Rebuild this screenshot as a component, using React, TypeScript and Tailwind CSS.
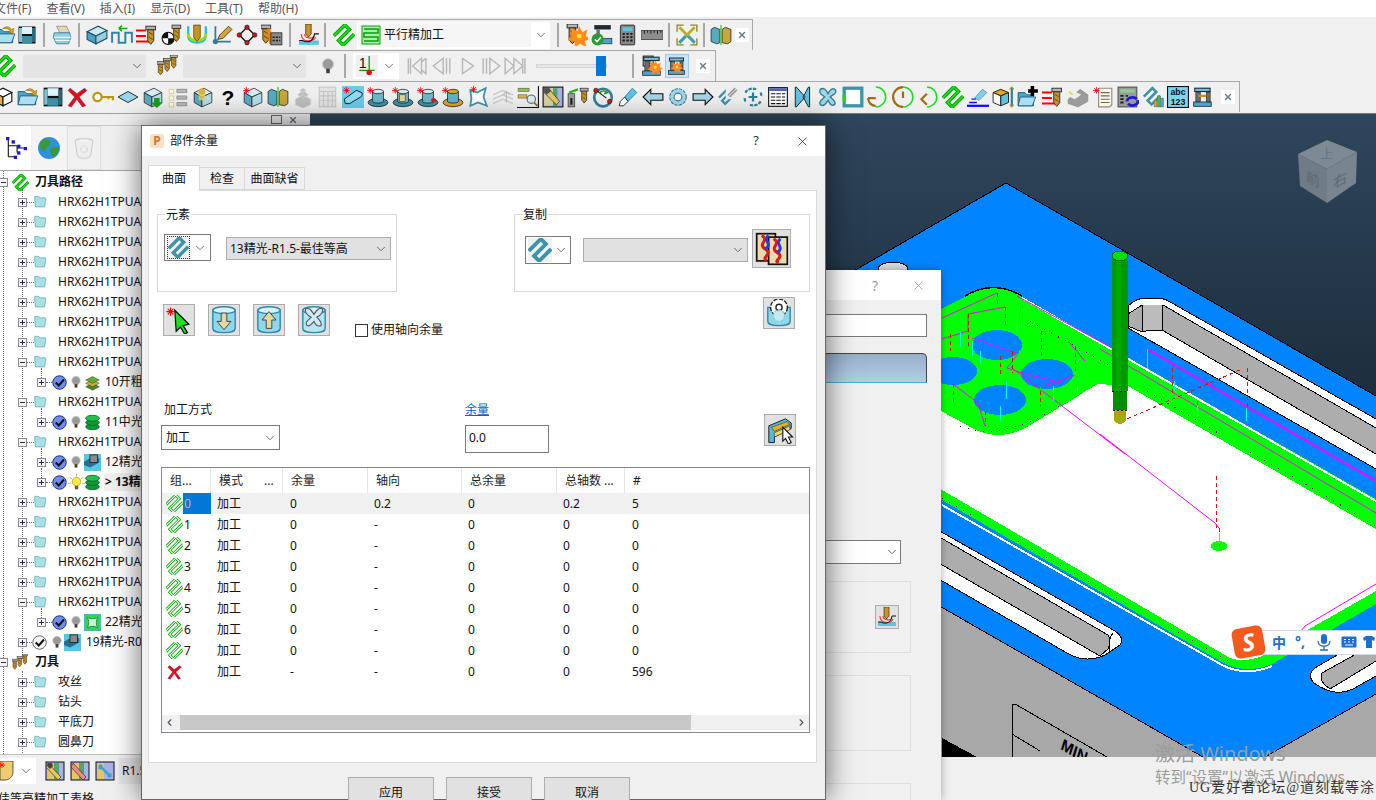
import type { ReactNode } from 'react'
import { ChevronDown, ChevronLeft, ChevronRight, X } from 'lucide-react'

const Svg = ({ size = 20, children }: { size?: number; children: ReactNode }) => (
  <svg width={size} height={size} viewBox="0 0 20 20" className="block shrink-0">
    {children}
  </svg>
)

const Zig = ({ dark = '#009a00', light = '#19e019', size = 22 }: { dark?: string; light?: string; size?: number }) => (
  <Svg size={size}>
    <g transform="rotate(-45 10 10)" fill="none" strokeLinejoin="miter">
      <path d="M3 4H17V10H3V16H17" stroke={dark} strokeWidth="3.2" />
      <path d="M3 4H17V10H3V16H17" stroke={light} strokeWidth="1.600" />
    </g>
  </Svg>
)

const Tool = ({ x = 0, y = 0, s = 1 }: { x?: number; y?: number; s?: number }) => (
  <g transform={`translate(${x} ${y}) scale(${s})`}>
    <rect width="8" height="3" fill="#b5b5b5" stroke="#222" strokeWidth=".7" />
    <path d="M1.5 3h5v9L4 15l-2.500-3z" fill="#c8931e" stroke="#222" strokeWidth=".7" />
    <path d="M2.500 5l3 2M2.500 9l3 2" stroke="#5f4208" strokeWidth=".8" />
  </g>
)

const Star = ({ x = 4, y = 4 }: { x?: number; y?: number }) => (
  <path d={`M${x - 3} ${y}h6M${x} ${y - 3}v6M${x - 2} ${y - 2}l4 4M${x + 2} ${y - 2}l-4 4`} stroke="#f00" strokeWidth=".8" />
)

const Cyl = ({ top = '#cfe9f1', dot }: { top?: string; dot?: string }) => (
  <>
    <ellipse cx="10" cy="15" rx="9" ry="3.800" fill="#3d8fa6" stroke="#222" strokeWidth=".7" />
    <path d="M5 5v9c0 2 10 2 10 0V5z" fill="#6cb8cc" stroke="#222" strokeWidth=".7" />
    <ellipse cx="10" cy="5" rx="5" ry="2" fill={top} stroke="#222" strokeWidth=".7" />
    {dot && <circle cx="15" cy="13" r="2.200" fill={dot} />}
  </>
)

const Open = (
  <>
    <path d="M1 5h6l2 2h8v10H1z" fill="#4ba3c7" stroke="#1d5d78" strokeWidth=".8" />
    <path d="M3 9h16l-3 8H1z" fill="#a9dff0" stroke="#1d5d78" strokeWidth=".8" />
    <path d="M8 4c3-2 6-2 8 1l2-1-1 5-4-2 2-1c-2-2-4-2-7-2z" fill="#e9a11b" stroke="#8a5a08" strokeWidth=".5" />
  </>
)

const Save = (
  <>
    <rect x="1.500" y="1.500" width="17" height="17" fill="#111" />
    <rect x="5" y="2" width="10" height="7" fill="#dff2f7" />
    <rect x="5" y="11" width="10" height="7" fill="#3d8fa6" />
    <rect x="2" y="3" width="3" height="14" fill="#7cc4d8" />
    <rect x="15" y="3" width="3" height="14" fill="#2a6b80" />
  </>
)

const BoxT = (
  <>
    <path d="M2 6l9-4 7 4-9 4z" fill="#d6eef5" stroke="#222" strokeWidth=".7" />
    <path d="M2 6v9l7 4v-9z" fill="#5ba9c0" stroke="#222" strokeWidth=".7" />
    <path d="M9 10v9l9-4V6z" fill="#b4dde9" stroke="#222" strokeWidth=".7" />
  </>
)

const Calc = (
  <>
    <rect x="4" y="1" width="13" height="18" rx="1" fill="#8a8a8a" stroke="#222" strokeWidth=".8" />
    <rect x="6" y="3" width="9" height="3.500" fill="#58c6e6" />
    <path d="M6 9h2M9.500 9h2M13 9h2M6 12h2M9.500 12h2M13 12h2M6 15h2M9.500 15h2M13 15h2" stroke="#111" strokeWidth="1.600" />
  </>
)

const Burst = ({ x = 13, y = 11, r = 7 }: { x?: number; y?: number; r?: number }) => (
  <>
    <path
      d={`M${x - r} ${y - r}l${r * 0.8} ${r * 0.4}l${r * 0.2} ${-r * 0.6}l${r * 0.4} ${r * 0.7}l${r * 0.6} ${-r * 0.3}l${-r * 0.2} ${r * 0.8}l${r * 0.6} ${r * 0.3}l${-r * 0.7} ${r * 0.3}l${r * 0.2} ${r * 0.8}l${-r * 0.8} ${-r * 0.5}l${-r * 0.6} ${r * 0.5}l${-r * 0.1} ${-r * 0.8}l${-r * 0.8} ${-r * 0.1}l${r * 0.5} ${-r * 0.6}z`}
      fill="#ff8a1f"
    />
    <circle cx={x} cy={y} r={r * 0.3} fill="#ffe03a" />
  </>
)

const Machine = (
  <>
    <rect x="2" y="1.500" width="15" height="4" fill="#1e2a30" />
    <rect x="3" y="2.500" width="13" height="2" fill="#72c4dd" />
    <rect x="3.500" y="5.500" width="4" height="9" fill="#6d6d6d" stroke="#222" strokeWidth=".6" />
    <rect x="1.500" y="14.500" width="16" height="4" fill="#4ba3c7" stroke="#222" strokeWidth=".7" />
  </>
)

const Ico: Record<string, ReactNode> = {
  open: Open,
  save: Save,
  print: (
    <>
      <path d="M5 2h9l3 6H8z" fill="#e3d9b0" stroke="#777" strokeWidth=".6" />
      <path d="M3 8h14l1 4-2 6H5l-3-6z" fill="#8fd0e6" stroke="#3b7f98" strokeWidth=".8" />
      <path d="M3 12h15M4 15h13" stroke="#fff" />
    </>
  ),
  box: (
    <>
      <path d="M1 7l10-5 8 4-10 5z" fill="#cfe9f1" stroke="#1d4e60" strokeWidth="1" />
      <path d="M1 7v7l8 4v-7z" fill="#4ba3c7" stroke="#1d4e60" strokeWidth="1" />
      <path d="M9 11v7l10-5V6z" fill="#97cfe0" stroke="#1d4e60" strokeWidth="1" />
    </>
  ),
  path: (
    <>
      <path d="M1 17V8h6v9h6V8h6v9" fill="none" stroke="#2d88a8" strokeWidth="1.800" />
      <path d="M15 4H7M7 4l3-2.500M7 4l3 2.500" fill="none" stroke="#17a317" strokeWidth="1.400" />
    </>
  ),
  linesTool: (
    <>
      <path d="M0 6h9M0 11h9M0 16h12" stroke="#f00" strokeWidth="1.800" />
      <Tool x={9} y={2} s={1.100} />
    </>
  ),
  ballTool: (
    <>
      <circle cx="6.500" cy="13" r="5.500" fill="#fff" stroke="#111" />
      <path d="M6.500 13V7.500a5.500 5.500 0 0 0-5.500 5.500zM6.500 13v5.500a5.500 5.500 0 0 0 5.500-5.500z" fill="#111" />
      <Tool x={10} y={1} s={1} />
    </>
  ),
  uTool: (
    <>
      <path d="M2 2v9c0 8 16 8 16 0V2" fill="none" stroke="#18c0e8" strokeWidth="2" />
      <path d="M2 9c0 8 16 8 16 0" fill="none" stroke="#a8d800" strokeWidth="2.400" />
      <path d="M7 1h6v11l-3 4-3-4z" fill="#c8931e" stroke="#4a3205" strokeWidth=".6" />
    </>
  ),
  arrowPen: (
    <>
      <path d="M4 2v14h14" fill="none" stroke="#2d7f9a" strokeWidth="1.600" />
      <circle cx="4" cy="16" r="2.400" fill="#2d7f9a" />
      <path d="M6 14l2-4 8-8 3 3-8 8z" fill="#d8a537" stroke="#222" strokeWidth=".7" />
    </>
  ),
  dots: (
    <>
      <path d="M10 3l7 7-7 7-7-7z" fill="none" stroke="#111" strokeWidth="1.200" />
      <g fill="#e01010" stroke="#111" strokeWidth=".6">
        <circle cx="10" cy="3" r="2" />
        <circle cx="17" cy="10" r="2" />
        <circle cx="10" cy="17" r="2" />
        <circle cx="3" cy="10" r="2" />
      </g>
    </>
  ),
  toolCalc: (
    <>
      <Tool x={0} y={1} s={1.100} />
      <path d="M7 4l2 14" stroke="#ff7a18" strokeWidth="3" />
      <rect x="9" y="8" width="10" height="11" fill="#8a8a8a" stroke="#222" strokeWidth=".7" />
      <path d="M10.500 12h7M10.500 15h7" stroke="#222" strokeDasharray="2 1" strokeWidth="1.400" />
    </>
  ),
  toolArc: (
    <>
      <rect x="1" y="15" width="18" height="4" fill="#58c6e6" />
      <path d="M3 9c0 8 11 8 13 3" fill="none" stroke="#e44" strokeWidth="1.200" />
      <path d="M6 9c0 4 7 5 9 2" fill="none" stroke="#e44" strokeWidth="1.200" />
      <path d="M1 15h3c6 3 10 0 11-6h4" fill="none" stroke="#111" strokeWidth="1" />
      <path d="M7 0h5v9l-2.500 3L7 9z" fill="#c8931e" stroke="#222" strokeWidth=".6" />
    </>
  ),
  green: (
    <>
      <rect x="1" y="1" width="18" height="18" fill="#a8f0a8" stroke="#109a10" />
      <path d="M3 4h14v4H3v4h14v4H3" fill="none" stroke="#0a9a0a" strokeWidth="1.500" />
    </>
  ),
  burst: (
    <>
      <Tool x={1} y={0} s={1.200} />
      <Burst x={12} y={11} r={7.500} />
    </>
  ),
  machCheck: (
    <>
      <rect x="3" y="1" width="15" height="4" fill="#1e2a30" />
      <rect x="5" y="5" width="3" height="7" fill="#6d6d6d" />
      <rect x="6" y="13" width="13" height="5" fill="#4ba3c7" stroke="#222" strokeWidth=".6" />
      <circle cx="6" cy="14" r="5.500" fill="#2b9a37" />
      <path d="M3.500 14l2 2 3.500-4" fill="none" stroke="#fff" strokeWidth="1.300" />
    </>
  ),
  calc: Calc,
  ruler: (
    <>
      <rect x="0" y="6" width="20" height="8" fill="#8d8d8d" stroke="#333" strokeWidth=".7" />
      <path d="M3 6v3M6 6v2M9 6v3M12 6v2M15 6v3M18 6v2" stroke="#111" strokeWidth=".8" />
    </>
  ),
  xArrows: (
    <>
      <path d="M3 3l14 14M17 3L3 17" stroke="#b7ad35" strokeWidth="2.600" />
      <path d="M11 11l6 6M9 11l-6 6" stroke="#3b9fb8" strokeWidth="2.600" />
      <path d="M1 7V1h6M13 1h6v6M19 13v6h-6M7 19H1v-6" fill="none" stroke="#8c8520" strokeWidth="1.200" />
    </>
  ),
  books: (
    <>
      <path d="M1 5l3-2 5 2v12l-3 1-5-2z" fill="#57aac4" stroke="#222" strokeWidth=".7" />
      <path d="M11 5l3-2 5 2v11l-3 2-5-1z" fill="#c9a53b" stroke="#222" strokeWidth=".7" />
      <path d="M10 1v18" stroke="#3cc63c" strokeWidth="1.200" />
    </>
  ),
  tools: (
    <>
      <Tool x={0} y={6} s={.8} />
      <Tool x={6} y={3} s={.8} />
      <Tool x={12} y={0} s={.8} />
    </>
  ),
  bulb: (
    <>
      <circle cx="10" cy="8" r="6" fill="#9a9a9a" stroke="#bbb" />
      <rect x="8" y="13" width="4" height="5" fill="#4d3a2a" />
    </>
  ),
  one: (
    <>
      <rect x="0" y="0" width="20" height="20" fill="#f0f0f0" />
      <path d="M12 1v16M3 14h14" stroke="#0aa00a" strokeWidth="1.200" />
      <circle cx="12" cy="16" r="2.500" fill="#e01010" />
      <text x="2.500" y="12" fontSize="13" fill="#111" fontFamily="Liberation Sans, sans-serif">1</text>
    </>
  ),
  first: <path d="M3 3v14M5 3v14M15 3l-8 7 8 7zM19 3l-4 3.500M19 3v14l-4-3.500" fill="none" stroke="#b8b8b8" strokeWidth="1.300" />,
  prev: <path d="M15 3v14M18 3v14M12 3l-9 7 9 7z" fill="none" stroke="#b8b8b8" strokeWidth="1.300" />,
  play: <path d="M5 3l10 7-10 7z" fill="none" stroke="#b8b8b8" strokeWidth="1.300" />,
  next: <path d="M2 3v14M5 3v14M8 3l9 7-9 7z" fill="none" stroke="#b8b8b8" strokeWidth="1.300" />,
  last: <path d="M1 3l8 7-8 7zM9 3l8 7-8 7zM17 3v14M19 3v14" fill="none" stroke="#b8b8b8" strokeWidth="1.300" />,
  machFire: (
    <>
      <rect x="2" y="1" width="9" height="9" fill="#fff" stroke="#222" />
      <path d="M3.500 3.500h6M3.500 5.500h6M3.500 7.500h6" stroke="#222" />
      {Machine}
      <Burst x={13} y={11} r={5} />
    </>
  ),
  machFire2: (
    <>
      {Machine}
      <rect x="13" y="5" width="3" height="9" fill="#6d6d6d" stroke="#222" strokeWidth=".6" />
      <Burst x={10} y={11} r={4.500} />
    </>
  ),
  box3d: (
    <>
      <path d="M2 6l8-4 8 4-8 4z" fill="#fff" stroke="#111" />
      <path d="M2 6v8l8 4v-8z" fill="#e4b53a" stroke="#111" />
      <path d="M10 10v8l8-4V6z" fill="#fff" stroke="#111" />
    </>
  ),
  redX: <path d="M3 2l6 5 7-5 2 2-7 6 6 8-3 1-5-7-5 7-3-1 6-8-6-6z" fill="#e20d0d" stroke="#7a1880" strokeWidth=".5" />,
  key: (
    <>
      <circle cx="5" cy="10" r="3.800" fill="#fff" stroke="#b99a08" strokeWidth="2" />
      <path d="M9 10h10v3M15 10v2" fill="none" stroke="#b99a08" strokeWidth="2" />
    </>
  ),
  plane: <path d="M1 10l9-5 9 5-9 5z" fill="#9bd7ea" stroke="#111" strokeWidth=".8" />,
  boxDown: (
    <>
      {BoxT}
      <path d="M11 11h5v4h3l-5.500 5L8 15h3z" fill="#14a014" />
    </>
  ),
  list: (
    <>
      <path d="M2 3h4v4H2zM2 9h4v4H2zM2 15h4v4H2z" fill="#fdf7dc" stroke="#c6bd84" strokeWidth=".6" />
      <path d="M9 3h9v3H9zM9 9h9v3H9zM9 15h9v3H9z" fill="#b8b8b8" stroke="#666" strokeWidth=".5" />
    </>
  ),
  boxCyan: (
    <>
      {BoxT}
      <rect x="6" y="4" width="6" height="9" fill="#e4cf6a" fillOpacity=".8" />
      <circle cx="9" cy="5" r="3" fill="#d8b53a" />
    </>
  ),
  help: <text x="10" y="17" textAnchor="middle" fontSize="19" fontWeight="700" fill="#000" fontFamily="Liberation Sans, sans-serif">?</text>,
  burstBox: (
    <>
      {BoxT}
      <Star x={4} y={4} />
    </>
  ),
  grayStack: <path d="M3 12l7-4 7 4v5l-7 3-7-3zM5 8l5-4 5 4-5 3zM7 4l3-2 3 2-3 2z" fill="#bdbdbd" stroke="#d5d5d5" strokeWidth=".6" />,
  grayCalc: (
    <>
      <rect x="2" y="1" width="15" height="18" fill="#e3e3e3" stroke="#c6c6c6" />
      <path d="M2 5h15M2 9h15M2 13h15M6 5v14M10 5v14M14 5v14" stroke="#c6c6c6" />
    </>
  ),
  pad: (
    <>
      <rect x="0" y="0" width="20" height="20" fill="#69cdea" />
      <path d="M2 12L13 4l5 2c1 2 0 3-1 4L7 16H3z" fill="#8fdcf2" stroke="#123" strokeWidth=".9" />
      <Star x={4} y={4} />
    </>
  ),
  cylA: (
    <>
      <Cyl />
      <Star x={3} y={4} />
    </>
  ),
  cylB: (
    <>
      <Cyl />
      <rect x="7" y="8" width="5" height="6" fill="#e9d48a" stroke="#333" strokeWidth=".5" />
      <Star x={3} y={4} />
    </>
  ),
  cylC: (
    <>
      <Cyl dot="#d81818" />
      <Star x={3} y={4} />
    </>
  ),
  cylD: (
    <>
      <ellipse cx="10" cy="15" rx="9" ry="3.800" fill="#d8a52a" stroke="#222" strokeWidth=".7" />
      <path d="M5 5v9c0 2 10 2 10 0V5z" fill="#5fb2c8" stroke="#222" strokeWidth=".7" />
      <ellipse cx="10" cy="5" rx="5" ry="2" fill="#d8a52a" stroke="#222" strokeWidth=".7" />
      <Star x={3} y={4} />
    </>
  ),
  star: (
    <>
      <path d="M3 4l6 2 8-4-2 8 3 8-8-3-7 3 1-7z" fill="#fff" stroke="#3d94a8" strokeWidth="1.600" />
      <Star x={6} y={3} />
    </>
  ),
  grayUp: (
    <>
      <path d="M1 8l9-4 9 4M1 12l9-4 9 4M1 16l9-4 9 4" fill="none" stroke="#c8c8c8" strokeWidth="1.200" />
      <path d="M13 15V5M10 8l3-3 3 3" fill="none" stroke="#bcbcbc" />
    </>
  ),
  search: (
    <>
      <rect x="1" y="2" width="10" height="3" fill="#8fc04b" stroke="#555" strokeWidth=".5" />
      <rect x="1" y="8" width="8" height="3" fill="#d8b53a" stroke="#555" strokeWidth=".5" />
      <circle cx="13" cy="12" r="3.800" fill="#d9edf5" stroke="#666" />
      <path d="M15.500 15l3 3" stroke="#7c6a30" strokeWidth="1.600" />
      <path d="M0 19.500h20M19.500 0v20" stroke="#111" />
    </>
  ),
  bookTool: (
    <>
      <rect x="1" y="1" width="18" height="18" fill="#a7b3e8" stroke="#111" />
      <rect x="2" y="2" width="8" height="16" fill="#d8d49a" />
      <rect x="10" y="2" width="4" height="16" fill="#4ea868" />
      <path d="M2 2h4l10 12-3 3L2 6z" fill="#e4c764" stroke="#222" strokeWidth=".6" />
      <path d="M2 2h5l1 3-4 3-2-2z" fill="#555" />
    </>
  ),
  toolsGreen: (
    <>
      <rect x="1" y="7" width="6" height="12" fill="#9b9b9b" stroke="#444" strokeWidth=".7" />
      <rect x="3" y="11" width="2" height="6" fill="#222" />
      <path d="M2 6l8-3" stroke="#25b025" strokeWidth="2" />
      <Tool x={12} y={2} s={.9} />
    </>
  ),
  circleArrow: (
    <>
      <circle cx="10" cy="10.500" r="8" fill="none" stroke="#2d7f9a" strokeWidth="2.400" />
      <path d="M4 4l9 7" stroke="#111" />
      <path d="M7 6c2-2 5-2 7 0l-3 1" fill="none" stroke="#1a9a1a" strokeWidth="1.400" />
      <circle cx="3.500" cy="4" r="2" fill="#d81818" stroke="#111" strokeWidth=".5" />
      <circle cx="16" cy="14" r="2" fill="#d81818" stroke="#111" strokeWidth=".5" />
    </>
  ),
  pen: (
    <>
      <path d="M7 10l7-8 4 4-8 8z" fill="#58c6e6" stroke="#2d7f9a" strokeWidth=".8" />
      <path d="M2 18l1-4 4-4 3 4-4 4z" fill="#fff" stroke="#222" strokeWidth=".8" />
    </>
  ),
  arrowL: <path d="M1 10l7-7v4h11v6H8v4z" fill="#a5d6e6" stroke="#111" strokeWidth="1" />,
  arrowR: <path d="M19 10l-7-7v4H1v6h11v4z" fill="#a5d6e6" stroke="#111" strokeWidth="1" />,
  gear: (
    <>
      <circle cx="10" cy="10" r="7.500" fill="#a5d6e6" stroke="#2d7f9a" strokeWidth="1" strokeDasharray="3 1" />
      <circle cx="10" cy="10" r="3.500" fill="#fff" stroke="#2d7f9a" />
    </>
  ),
  zigGray: (
    <>
      <g transform="translate(0 2) scale(.8)">
        <g transform="rotate(-45 10 10)" fill="none">
          <path d="M4 5H16V10H4V15H16" stroke="#3d94a8" strokeWidth="2.600" />
        </g>
      </g>
      <rect x="8" y="0" width="12" height="12" fill="#eee" />
      <g transform="translate(9 1) scale(.5)">
        <path d="M2 15L15 2M5 18L18 5" stroke="#9a9a9a" strokeWidth="3" />
      </g>
    </>
  ),
  spin: (
    <>
      <path d="M10 6v8M6 10h8" stroke="#2d7f9a" strokeWidth="2" />
      <path d="M3 6a8 8 0 0 1 10-3M17 14a8 8 0 0 1-10 3M3 14l-1-4M17 6l1 4" fill="none" stroke="#2d7f9a" strokeWidth="2" strokeDasharray="3 1" />
    </>
  ),
  table: (
    <>
      <rect x="1.500" y="1.500" width="17" height="17" fill="#fff" stroke="#111" />
      <rect x="2" y="2" width="16" height="2.500" fill="#4f5fc0" />
      <path d="M3.500 7h13M3.500 10h13M3.500 13h13M3.500 16h13" stroke="#111" strokeDasharray="4 1" />
    </>
  ),
  hour: (
    <>
      <path d="M3 1h1l8 9-8 9H3zM16 1h-1l-5 9 5 9h1z" fill="#5cc4e6" stroke="#111" strokeWidth=".8" />
    </>
  ),
  xTeal: <path d="M3 3c3-2 5 0 7 4 2-4 5-6 7-3 1 3-3 4-5 6 2 2 6 4 4 7-3 2-5-2-6-4-2 3-4 6-7 4-2-3 2-5 4-7-2-2-6-3-4-7z" fill="#a5d6e6" stroke="#2d7f9a" strokeWidth="1.300" />,
  square: (
    <>
      <rect x="2" y="2" width="16" height="16" fill="#fff" stroke="#3d94a8" strokeWidth="3" />
      <path d="M2 8v6" stroke="#14e014" strokeWidth="3" />
    </>
  ),
  arc1: (
    <>
      <path d="M8 1a9 9 0 0 1 0 18" fill="none" stroke="#18e018" strokeWidth="1.400" />
      <path d="M1 11h7M1 11c0 4 3 7 7 7" fill="none" stroke="#a06c10" strokeWidth="2" />
    </>
  ),
  arc2: (
    <>
      <path d="M10 1a9 9 0 0 1 0 18" fill="none" stroke="#18e018" strokeWidth="1.400" />
      <path d="M10 1a9 9 0 0 0 0 18M10 5v6" fill="none" stroke="#a06c10" strokeWidth="2" />
    </>
  ),
  arc3: (
    <>
      <path d="M9 1a9 9 0 0 1 0 18" fill="none" stroke="#18e018" strokeWidth="1.400" />
      <path d="M9 7l-5 5 5 5" fill="none" stroke="#a06c10" strokeWidth="2" />
    </>
  ),
  penU: (
    <>
      <path d="M7 11l7-8 4 3-7 7z" fill="#7fd0ea" stroke="#2d7f9a" strokeWidth=".6" />
      <path d="M0 18h20" stroke="#0a0aff" strokeWidth="2" />
      <path d="M2 15h7M4 12h4" stroke="#0a0aff" strokeWidth="1.200" />
    </>
  ),
  boxAxis: (
    <>
      <path d="M1 6l7-3 7 3-7 3z" fill="#e4a81e" stroke="#111" strokeWidth=".8" />
      <path d="M1 6v9l7 3V9z" fill="#fff" stroke="#111" strokeWidth=".8" />
      <path d="M8 9v9l7-3V6z" fill="#5fc4e0" stroke="#111" strokeWidth=".8" />
      <path d="M18 1v18" stroke="#2d7f9a" strokeWidth="2" />
      <path d="M16 3l2-2 2 2M16 17l2 2 2-2" fill="none" stroke="#c8931e" strokeWidth="1" />
    </>
  ),
  folderPlus: (
    <>
      <path d="M1 6h6l2 2h6v10H1z" fill="#4ba3c7" stroke="#1d5d78" strokeWidth=".8" />
      <path d="M3 10h14l-3 8H1z" fill="#a9dff0" stroke="#1d5d78" strokeWidth=".8" />
      <path d="M14 0v9M10 4.500h9" stroke="#000" strokeWidth="3.200" />
    </>
  ),
  grayShape: (
    <>
      <path d="M1 12l11-9 7 5v6l-9 5-9-3z" fill="#9b9b9b" stroke="#888" strokeWidth=".5" />
      <path d="M1 9l6-4 6 3-6 4z" fill="#eee" />
      <path d="M2 5l3 3" stroke="#e6dc20" strokeWidth="1.600" />
    </>
  ),
  note: (
    <>
      <path d="M6 2h12v15l-2 2H6z" fill="#fdf8dd" stroke="#888" />
      <path d="M8 6h8M8 9h8M8 12h8M8 15h8" stroke="#666" />
      <Star x={4} y={4} />
    </>
  ),
  calcSpin: (
    <>
      <rect x="1" y="1" width="17" height="18" fill="#9a9a9a" stroke="#555" />
      <rect x="3" y="3" width="13" height="3" fill="#8fd08f" />
      <path d="M3 9h3M3 12h3M3 15h3M8 9h2" stroke="#222" strokeWidth="1.600" />
      <path d="M9 14a5 4 0 0 1 9-2M19 13a5 4 0 0 1-9 3" fill="none" stroke="#1818e0" strokeWidth="2.400" />
    </>
  ),
  chartZig: (
    <>
      <g transform="rotate(-45 8 9)" fill="none">
        <path d="M3 5H14V10H3V15H14" stroke="#3d94a8" strokeWidth="2.400" />
      </g>
      <rect x="11" y="13" width="2.500" height="6" fill="#e6a81e" stroke="#555" strokeWidth=".4" />
      <rect x="14" y="9" width="2.500" height="10" fill="#3fbf3f" stroke="#555" strokeWidth=".4" />
      <rect x="17" y="11" width="2.500" height="8" fill="#3fa6e0" stroke="#555" strokeWidth=".4" />
    </>
  ),
  abc: (
    <>
      <rect x=".5" y=".5" width="19" height="19" fill="#7fd4ea" stroke="#111" />
      <text x="10" y="8.500" textAnchor="middle" fontSize="8" fontWeight="700" fill="#111" fontFamily="Liberation Sans, sans-serif">abc</text>
      <text x="10" y="17" textAnchor="middle" fontSize="8" fontWeight="700" fill="#111" fontFamily="Liberation Sans, sans-serif">123</text>
    </>
  ),
  machine: (
    <>
      {Machine}
      <rect x="13" y="5.500" width="3.500" height="9" fill="#6d6d6d" stroke="#222" strokeWidth=".6" />
      <path d="M6 9h7" stroke="#c8931e" strokeWidth="2" />
    </>
  ),
  pick: (
    <>
      <path d="M7 3l10 10-4 1 3 5-2 1-3-5-3 3z" fill="#1ee01e" stroke="#111" strokeWidth=".9" />
      <Star x={4} y={4} />
    </>
  ),
  cylDown: (
    <>
      <path d="M2 3v13c0 4 16 4 16 0V3z" fill="#8fd8ec" stroke="#2d88a8" />
      <ellipse cx="10" cy="3" rx="8" ry="2.500" fill="#d9f2f9" stroke="#2d88a8" />
      <path d="M8 5h4v6h3l-5 6-5-6h3z" fill="#e3d9a0" stroke="#444" strokeWidth=".7" />
    </>
  ),
  cylUp: (
    <>
      <path d="M2 3v13c0 4 16 4 16 0V3z" fill="#8fd8ec" stroke="#2d88a8" />
      <ellipse cx="10" cy="3" rx="8" ry="2.500" fill="#d9f2f9" stroke="#2d88a8" />
      <path d="M8 16h4v-6h3l-5-6-5 6h3z" fill="#e3d9a0" stroke="#444" strokeWidth=".7" />
    </>
  ),
  cylX: (
    <>
      <path d="M2 3v13c0 4 16 4 16 0V3z" fill="#b7e4f0" stroke="#2d88a8" />
      <ellipse cx="10" cy="3" rx="8" ry="2.500" fill="#d9f2f9" stroke="#2d88a8" />
      <path d="M4 2c3-1 4 1 6 4 2-3 3-5 6-4 1 3-2 5-4 6 2 2 4 4 3 6-3 1-4-1-5-3-2 2-3 4-5 3-2-2 1-4 3-6-2-1-5-3-4-6z" fill="#cfeaf3" stroke="#555" strokeWidth=".8" />
    </>
  ),
  cylGear: (
    <>
      <path d="M2 6v10c0 4 16 4 16 0V6z" fill="#8fd8ec" stroke="#2d88a8" />
      <circle cx="10" cy="6" r="6" fill="#fff" stroke="#222" strokeDasharray="3 1" />
      <circle cx="10" cy="6" r="2.200" fill="#fff" stroke="#222" />
      <circle cx="10" cy="12" r="4" fill="#c6e9f3" stroke="#9cc" strokeDasharray="2 1" />
    </>
  ),
  twist: (
    <>
      <rect x="1" y="1" width="11" height="16" fill="#e8dcae" stroke="#111" />
      <rect x="8" y="3" width="11" height="16" fill="#e8dcae" stroke="#111" />
      <path d="M4 2c5 3-3 5 2 8s-3 5 1 7" fill="none" stroke="#e01818" strokeWidth="1.800" />
      <path d="M8 2c-4 3 3 5-2 8" fill="none" stroke="#2a3bd8" strokeWidth="1.800" />
      <path d="M11 4c5 3-3 5 2 8s-3 5 1 6" fill="none" stroke="#e01818" strokeWidth="1.800" />
      <path d="M15 4c-4 3 3 5-2 8" fill="none" stroke="#2a3bd8" strokeWidth="1.800" />
    </>
  ),
  drawer: (
    <>
      <path d="M2 7l12-5 4 3v4l-12 6v4H2z" fill="#58b8d2" stroke="#222" strokeWidth=".7" />
      <path d="M4 8l11-4 2 2-11 5z" fill="#e8b020" stroke="#444" strokeWidth=".5" />
      <path d="M6 12l11-5v3L6 15z" fill="#f3d56a" stroke="#444" strokeWidth=".5" />
      <path d="M12 8l7 7-3 0 2 4-2 1-2-4-2 2z" fill="#fff" stroke="#111" strokeWidth=".8" />
    </>
  ),
  cone: (
    <>
      <path d="M0 0h13v11c0 5-4 8-8 8H0z" fill="#f0cb70" stroke="#333" strokeWidth=".8" />
      <Star x={2} y={4} />
    </>
  ),
  bookA: (
    <>
      <rect x="1" y="1" width="18" height="18" fill="#a7b3e8" stroke="#111" />
      <rect x="2" y="2" width="7" height="16" fill="#e4c764" />
      <rect x="9" y="2" width="5" height="16" fill="#4ea868" />
      <path d="M3 2l13 14-3 3L1 6z" fill="#e4c764" stroke="#222" strokeWidth=".6" />
      <path d="M3 2h4l1 3-3 3-3-3z" fill="#444" />
    </>
  ),
  bookB: (
    <>
      <rect x="1" y="1" width="18" height="18" fill="#a7b3e8" stroke="#111" />
      <rect x="2" y="2" width="7" height="16" fill="#e4c764" />
      <rect x="9" y="2" width="5" height="16" fill="#4ea868" />
      <path d="M3 2l13 14-3 3L1 6z" fill="#f08888" stroke="#222" strokeWidth=".6" />
    </>
  ),
  bookC: (
    <>
      <rect x="1" y="1" width="18" height="18" fill="#a7b3e8" stroke="#111" />
      <rect x="2" y="2" width="7" height="16" fill="#e4c764" />
      <path d="M4 4l12 12M4 8l3-4M13 16l3-3" stroke="#3da3d8" strokeWidth="2.600" />
    </>
  ),
  tree: (
    <>
      <path d="M3 2v16M3 8h8v6M11 10h6M3 18h6" fill="none" stroke="#111" />
      <g fill="#1414e8">
        <rect x="1" y="0" width="3" height="3" />
        <rect x="6" y="3" width="3" height="3" />
        <rect x="11" y="7" width="3" height="3" />
        <rect x="17" y="9" width="3" height="3" />
        <rect x="11" y="13" width="3" height="3" />
        <rect x="8" y="17" width="3" height="3" />
      </g>
    </>
  ),
  globe: (
    <>
      <circle cx="10" cy="10" r="10" fill="#2f8fe0" />
      <path d="M4 3c4-2 8-1 7 3-1 3-3 2-4 5s-3 3-4 0S1 6 4 3zM12 10c3-2 6-1 7 1-1 4-3 7-6 7-1-3-3-6-1-8z" fill="#3c9a2e" />
    </>
  ),
  trash: (
    <>
      <ellipse cx="10" cy="4" rx="8" ry="2.500" fill="#f3f3f3" stroke="#cfcfcf" />
      <path d="M2 4l2 13c1 3 11 3 12 0l2-13" fill="#eee" stroke="#cfcfcf" />
      <circle cx="10" cy="11" r="3" fill="none" stroke="#d8d8d8" strokeDasharray="3 1" />
    </>
  ),
  folderT: <path d="M1 5V2h6l1 2h8l1 2-2 11H2z" fill="#a8e0e4" stroke="#58a8b0" strokeWidth="1" />,
  stack: (
    <>
      <path d="M2 15l8-4 8 4-8 4z" fill="#4a8a2a" stroke="#222" strokeWidth=".5" />
      <path d="M2 11l8-4 8 4-8 4z" fill="#c8b030" stroke="#222" strokeWidth=".5" />
      <path d="M2 7l8-4 8 4-8 4z" fill="#5fae2f" stroke="#222" strokeWidth=".5" />
    </>
  ),
  coil: (
    <>
      <ellipse cx="10" cy="15" rx="8" ry="3.500" fill="#0d9a2e" stroke="#063" />
      <ellipse cx="10" cy="10" rx="8" ry="3.500" fill="#0d9a2e" stroke="#063" />
      <ellipse cx="10" cy="5" rx="8" ry="3.500" fill="#23c14a" stroke="#063" />
    </>
  ),
  slab: (
    <>
      <rect width="20" height="20" fill="#58c6e6" />
      <path d="M0 9l12-7 6 3v5L7 16 0 13z" fill="#246f90" />
      <rect x="7" y="1" width="9" height="9" fill="#8a8a8a" stroke="#222" />
    </>
  ),
  xGreen: (
    <>
      <rect x=".5" y=".5" width="19" height="19" fill="#33d64f" stroke="#3db0c6" />
      <path d="M4 4c4 2 8 2 12 0-2 4-2 8 0 12-4-2-8-2-12 0 2-4 2-8 0-12z" fill="#c9f4d2" stroke="#148a3a" />
    </>
  )
}

const Icon = ({ n, size = 22 }: { n: string; size?: number }) => <Svg size={size}>{Ico[n]}</Svg>

const Cell = ({ n }: { n: string }) => (
  <span className="flex h-[28px] w-[25px] shrink-0 items-center justify-center">
    <Icon n={n} />
  </span>
)

const Sep = () => (
  <span className="flex h-[28px] w-[10px] shrink-0 items-center justify-center">
    <span className="h-[24px] w-[2px] bg-[#a8a8a8]" />
  </span>
)

const Close = () => (
  <span className="flex h-[14px] w-[14px] shrink-0 items-center justify-center bg-white">
    <X size={10} strokeWidth={3.500} className="text-[#6d7d8c]" />
  </span>
)

const Chev = ({ className = '' }: { className?: string }) => (
  <ChevronDown size={14} strokeWidth={1.300} className={`shrink-0 text-[#444] ${className}`} />
)

const row3 = [
  'box3d', 'open', 'save', 'redX', 'key', 'plane', 'boxDown', 'list', 'boxCyan', 'help', 'burstBox', 'books', 'grayStack', 'grayCalc',
  'pad', 'cylA', 'cylB', 'cylC', 'cylD', 'star', 'grayUp', 'search', 'bookTool', 'toolsGreen', 'circleArrow', 'pen', 'arrowL', 'gear',
  'arrowR', 'zigGray', 'spin', 'table', 'hour', 'xTeal', 'square', 'arc1', 'arc2', 'arc3', '@zig', 'penU', 'boxAxis', 'folderPlus',
  'linesTool', 'grayShape', 'note', 'calcSpin', 'chartZig', 'abc', 'machine'
]

function Toolbars() {
  return (
    <div className="h-[96px] shrink-0 overflow-hidden">
      {/* row 1 */}
      <div className="mt-[2px] flex h-[31px] w-[759px] items-center border-r border-t border-[#a8a8a8] -ml-[6px] [&>*]:shrink-0">
        <span className="flex w-[22px] justify-center"><Icon n="open" /></span>
        <span className="flex w-[22px] justify-center"><Icon n="save" size={20} /></span>
        <span className="flex w-[12px] justify-center"><span className="h-[24px] w-[2px] bg-[#a8a8a8]" /></span>
        <span className="flex w-[24px] justify-center"><Icon n="print" /></span>
        <Sep />
        <Cell n="box" /><Cell n="path" /><Cell n="linesTool" /><Cell n="ballTool" /><Cell n="uTool" /><Cell n="arrowPen" /><Cell n="dots" /><Cell n="toolCalc" />
        <span className="flex w-[12px] justify-center"><span className="h-[24px] w-[2px] bg-[#a8a8a8]" /></span>
        <Cell n="toolArc" />
        <span className="flex w-[8px] justify-center"><span className="h-[24px] w-[2px] bg-[#a8a8a8]" /></span>
        <span className="ml-[1px] flex w-[27px] justify-center"><Zig /></span>
        <div className="flex h-[27px] w-[193px] items-center bg-white pl-[1px]">
          <div className="flex h-[24px] w-[173px] items-center gap-[3px] bg-[#f6f6f6] pl-[3px] text-[12px] text-[#111]">
            <Icon n="green" size={20} />平行精加工
          </div>
          <Chev className="ml-[3px]" />
        </div>
        <span className="ml-[2px] flex w-[12px] justify-center"><span className="h-[24px] w-[2px] bg-[#a8a8a8]" /></span>
        <Cell n="burst" /><Cell n="machCheck" /><Cell n="calc" /><Cell n="ruler" />
        <Sep />
        <Cell n="xArrows" />
        <Sep />
        <span className="flex w-[24px] justify-center"><Icon n="books" /></span>
        <span className="ml-[2px]"><Close /></span>
      </div>
      {/* row 2 */}
      <div className="flex h-[31px] w-[722px] items-center border-r border-t border-[#a8a8a8] -ml-[6px] [&>*]:shrink-0">
        <span className="flex w-[22px] justify-center"><Zig /></span>
        <div className="ml-[7px] flex h-[23px] w-[123px] items-center justify-end bg-[#e4e4e4] pr-[2px]"><Chev /></div>
        <span className="ml-[9px] flex w-[26px] justify-center"><Icon n="tools" /></span>
        <div className="ml-[2px] flex h-[23px] w-[123px] items-center justify-end bg-[#e4e4e4] pr-[2px]"><Chev /></div>
        <span className="ml-[10px] flex w-[24px] justify-center"><Icon n="bulb" size={18} /></span>
        <Sep />
        <div className="ml-[3px] flex h-[26px] w-[46px] items-center bg-white pl-[3px]">
          <Icon n="one" />
          <Chev className="ml-[4px]" />
        </div>
        <span className="ml-[4px] flex w-[25px] justify-center"><Icon n="first" /></span>
        <Cell n="prev" />
        <span className="ml-[2px]"><Cell n="play" /></span>
        <span className="flex w-[23px] justify-center"><Icon n="next" /></span>
        <span className="flex w-[23px] justify-center"><Icon n="last" /></span>
        <div className="relative ml-[10px] flex h-[28px] w-[71px] items-center">
          <span className="h-[4px] w-full border border-[#d4d4d4] bg-[#e6e6e6]" />
          <span className="absolute left-[60px] top-[4px] h-[20px] w-[10px] bg-[#0078d7]" />
        </div>
        <span className="ml-[21px]"><Sep /></span>
        <span className="ml-[1px] flex w-[26px] justify-center"><Icon n="machFire" /></span>
        <span className="flex h-[24px] w-[24px] items-center justify-center border border-[#9cc8ee] bg-[#cce4f7]"><Icon n="machFire2" size={20} /></span>
        <span className="ml-[7px]"><Close /></span>
      </div>
      {/* row 3 */}
      <div className="flex h-[31px] w-[1250px] items-center border-r border-t border-[#a8a8a8] -ml-[10px]">
        {row3.map((n, i) =>
          n === '@zig' ? (
            <span key={i} className="flex h-[28px] w-[25px] shrink-0 items-center justify-center"><Zig /></span>
          ) : (
            <Cell key={i} n={n} />
          )
        )}
        <span className="ml-[6px]"><Close /></span>
      </div>
    </div>
  )
}

const Expander = ({ open }: { open?: boolean }) => (
  <span className="relative z-10 flex h-[9px] w-[9px] shrink-0 items-center justify-center border border-[#8a8a8a] bg-[#f4f4f4]">
    <span className="absolute h-px w-[5px] bg-[#1d2b5a]" />
    {!open && <span className="absolute h-[5px] w-px bg-[#1d2b5a]" />}
  </span>
)

const Dots = ({ className = '' }: { className?: string }) => (
  <span className={`h-0 shrink-0 border-t border-dotted border-[#666] ${className}`} />
)

const Check = ({ off }: { off?: boolean }) => (
  <Svg size={15}>
    <circle cx="10" cy="10" r="9" fill={off ? '#f3f3f3' : '#6d8cf0'} stroke={off ? '#666' : '#22306a'} strokeWidth="1.300" />
    <path d="M5 10l4 4 7-8" fill="none" stroke="#111" strokeWidth="2.600" />
  </Svg>
)

const Folder = ({ open, label }: { open?: boolean; label: string }) => (
  <div className="flex h-[20px] items-center pl-[18px]">
    <Expander open={open} />
    <Dots className="w-[7px]" />
    <Icon n="folderT" size={14} />
    <span className="ml-[10px] whitespace-nowrap">{label}</span>
  </div>
)

const Leaf = ({ n, label, lit, bold }: { n: string; label: string; lit?: boolean; bold?: boolean }) => (
  <div className="relative flex h-[20px] items-center pl-[37px]">
    <span className="absolute left-[41px] -top-[4px] h-[14px] border-l border-dotted border-[#666]" />
    <Expander />
    <Dots className="w-[6px]" />
    <Check />
    <span className="ml-[2px] flex w-[14px] justify-center">
      {lit ? (
        <Svg size={17}>
          <path d="M10 0v3M2 4l3 2M18 4l-3 2M0 11h3M17 11h3" stroke="#b7a630" />
          <circle cx="10" cy="9" r="5" fill="#ffe94a" stroke="#bba820" />
          <rect x="8" y="14" width="4" height="4" fill="#6b5a3a" />
        </Svg>
      ) : (
        <Svg size={14}>{Ico.bulb}</Svg>
      )}
    </span>
    <span className="ml-[1px]"><Icon n={n} size={17} /></span>
    <span className={`ml-[3px] whitespace-nowrap px-[1px] ${bold ? 'bg-[#f0f0f0] font-bold' : ''}`}>{label}</span>
  </div>
)

function TreePanel() {
  const hrx = 'HRX62H1TPUA'
  return (
    <div className="relative flex h-[687px] w-[310px] shrink-0 flex-col overflow-hidden bg-white text-[12px] text-[#111]">
      <div className="flex h-[12px] shrink-0 items-center justify-end gap-[6px] border-t border-[#a0a0a0] bg-[#f0f0f0] pr-[12px]">
        <span className="h-[9px] w-[11px] border border-[#666]" />
        <X size={10} strokeWidth={3} className="text-[#667]" />
      </div>
      <div className="flex h-[46px] shrink-0 items-end gap-[1px] border-b border-t border-b-[#a8a8a8] border-t-[#c8c8c8] bg-[#f0f0f0]">
        <span className="flex h-[44px] w-[31px] items-center justify-center bg-white"><Icon n="tree" size={22} /></span>
        <span className="flex h-[44px] w-[34px] items-center justify-center bg-[#f4f4f4]"><Icon n="globe" size={22} /></span>
        <span className="flex h-[44px] w-[34px] items-center justify-center border border-[#e0e0e0]"><Icon n="trash" size={22} /></span>
      </div>
      <div className="relative h-[583px] shrink-0 overflow-hidden pt-[1px]">
        <span className="absolute left-[3px] top-0 h-full border-l border-dotted border-[#666]" />
        <span className="absolute left-[22px] top-[18px] h-[470px] border-l border-dotted border-[#666]" />
        <span className="absolute left-[22px] top-[500px] h-[90px] border-l border-dotted border-[#666]" />
        <div className="flex h-[20px] items-center -ml-[1px]">
          <Expander open />
          <span className="ml-[4px]"><Zig size={17} /></span>
          <span className="ml-[6px] font-bold">刀具路径</span>
        </div>
        {[0, 1, 2, 3, 4, 5, 6, 7].map((i) => <Folder key={i} label={hrx} />)}
        <Folder open label={hrx} />
        <Leaf n="stack" label="10开粗-D8R0.8" />
        <Folder open label={hrx} />
        <Leaf n="coil" label="11中光-D6" />
        <Folder open label={hrx} />
        <Leaf n="slab" label="12精光-D4" />
        <Leaf n="coil" label="> 13精光-R1.5" lit bold />
        {[0, 1, 2, 3, 4].map((i) => <Folder key={i} label={hrx} />)}
        <Folder open label={hrx} />
        <Leaf n="xGreen" label="22精光-R1" />
        <div className="flex h-[20px] items-center pl-[18px]">
          <Expander />
          <Dots className="w-[5px]" />
          <Check off />
          <span className="ml-[3px] flex w-[14px] justify-center"><Svg size={14}>{Ico.bulb}</Svg></span>
          <Icon n="slab" size={17} />
          <span className="ml-[5px] whitespace-nowrap">19精光-R0.5</span>
        </div>
        <div className="flex h-[20px] items-center -ml-[1px]">
          <Expander open />
          <span className="ml-[4px]"><Icon n="tools" size={17} /></span>
          <span className="ml-[6px] font-bold">刀具</span>
        </div>
        <Folder label="攻丝" />
        <Folder label="钻头" />
        <Folder label="平底刀" />
        <Folder label="圆鼻刀" />
      </div>
      <div className="flex h-[32px] shrink-0 items-center border-t border-[#c0c0c0] bg-[#f0f0f0]">
        <div className="flex h-[26px] w-[36px] items-center bg-white">
          <Icon n="cone" size={20} />
          <Chev className="-ml-[1px]" />
        </div>
        <span className="ml-[9px]"><Icon n="bookA" size={20} /></span>
        <span className="ml-[5px]"><Icon n="bookB" size={20} /></span>
        <span className="ml-[5px]"><Icon n="bookC" size={20} /></span>
        <span className="ml-[4px] flex h-[26px] w-[60px] items-center bg-[#e4e4e4] pl-[3px]">R1.5</span>
      </div>
      <div className="-ml-[2px] h-[14px] shrink-0 whitespace-nowrap bg-[#f0f0f0] pt-[6px] leading-[14px]">佳等高精加工表格</div>
    </div>
  )
}

function Viewport() {
  const mag = '#ff00ff'
  return (
    <svg width="1066" height="643" viewBox="310 113 1066 643" className="block" shapeRendering="crispEdges">
      <defs>
        <linearGradient id="vbg" x1="0" y1="0" x2="0" y2="1">
          <stop offset="0" stopColor="#2f465c" />
          <stop offset=".5" stopColor="#1a2a38" />
          <stop offset="1" stopColor="#1a2a38" />
        </linearGradient>
      </defs>
      <rect x="310" y="113" width="1066" height="643" fill="url(#vbg)" />
      {/* cube */}
      <g shapeRendering="geometricPrecision">
        <path d="M1327 139l30 12-30 17-29-15z" fill="#7d8994" />
        <path d="M1298 153l29 15v34l-27-17z" fill="#6f7b86" />
        <path d="M1327 168l30-17 -1 31-29 20z" fill="#788490" />
        <text x="1327" y="157" textAnchor="middle" fontSize="13" fill="#68747f" fontFamily="Noto Sans CJK SC">上</text>
        <text transform="matrix(1 .5 0 1 1306 180)" fontSize="14" fill="#5d6973" fontFamily="Noto Sans CJK SC">前</text>
        <text transform="matrix(1 -.55 0 1 1333 188)" fontSize="14" fill="#5d6973" fontFamily="Noto Sans CJK SC">右</text>
      </g>
      {/* part */}
      <path d="M1006 182L1376 395V693L1265 756H1203L826 540V286Z" fill="#0084ff" stroke="#000" />
      <path d="M826 540L1203 756H826Z" fill="#a8a8a8" stroke="#000" />
      <path d="M1376 693L1265 756H1376Z" fill="#a8a8a8" stroke="#000" />
      <ellipse cx="893" cy="268" rx="15" ry="7" fill="#ddd" stroke="#000" />
      {/* upper slot */}
      <path d="M1128 305Q1136 297 1146 297H1160Q1166 298 1172 302L1376 418V468L1128 327Z" fill="#fff" stroke="#000" />
      <path d="M1128 313L1142 304H1163L1376 427V453L1162 329H1150L1142 331L1128 325Z" fill="#adadad" stroke="#000" />
      <path d="M1142 304V331M1162 304V329" stroke="#000" />
      <rect x="1143" y="304" width="19" height="25" fill="#bcbcbc" />
      {/* left slot */}
      <path d="M826 465L1115 630Q1125 637 1120 644L1105 654Q1085 663 1067 652L826 513Z" fill="#fff" stroke="#000" />
      <path d="M826 470L1108 634Q1112 640 1108 648L1100 655L826 497Z" fill="#adadad" stroke="#000" />
      <path d="M1113 632Q1107 640 1110 650" fill="none" stroke="#000" />
      {/* right slot */}
      <path d="M1376 632L1318 665Q1305 673 1314 682Q1335 697 1353 688L1376 675Z" fill="#fff" stroke="#000" />
      <path d="M1376 642L1322 672Q1318 680 1330 688L1376 660Z" fill="#adadad" stroke="#000" />
      {/* pocket wall and floor */}
      <path d="M826 365L965 296Q993 278 1022 296L1376 498V603L1272 663Q1245 674 1222 661L826 432Z" fill="#00ff00" />
      <path d="M965 295Q993 278 1022 295" fill="none" stroke="#000" strokeWidth="1.500" />
      <path d="M1022 297L1376 500" stroke="#fff" strokeWidth="2" />
      <path d="M942 504L1222 664Q1245 676 1272 665" fill="none" stroke="#fff" strokeWidth="2" />
      <path d="M826 340L941 410L965 423Q998 445 1032 423L1075 397Q1088 388 1098 383L1128 385L1376 528V590L1262 655Q1245 662 1230 657L942 489L826 422Z" fill="#fff" />
      <ellipse cx="997" cy="344" rx="25" ry="15" fill="#0084ff" />
      <ellipse cx="1047" cy="373" rx="26" ry="15" fill="#0084ff" />
      <ellipse cx="1000" cy="399" rx="26" ry="15" fill="#0084ff" />
      <ellipse cx="953" cy="370" rx="24" ry="14" fill="#0084ff" />
      <ellipse cx="1219" cy="545" rx="8" ry="5" fill="#00ff00" />
      {/* dotted band marks */}
      <g stroke="#000" strokeDasharray="1 7" fill="none">
        <path d="M1147 390L1376 525" />
        <path d="M942 497L1232 662" />
        <path d="M1030 320L1112 366" />
        <path d="M960 425Q1000 442 1060 405" />
      </g>
      {/* tool path */}
      <g fill="none" stroke={mag} shapeRendering="geometricPrecision">
        <path d="M942 317L997 292" />
        <path d="M1017 295L1112 347" />
        <path d="M942 338L968 330L968 313L1005 306" />
        <path d="M972 337L1018 353L1007 367L1022 372L1065 383" />
        <path d="M1011 366L1125 453M1100 433L1215 522L1219 527" />
        <path d="M1044 385L1075 374" />
        <path d="M953 383L978 402L985 425" />
        <path d="M1068 340L1085 360" />
        <path d="M1100 348L1376 512" />
        <path d="M1147 348L1376 480" strokeWidth="2" />
        <path d="M1376 583L1305 625L1285 650" />
      </g>
      <g fill="none" stroke="#f00" strokeDasharray="4 3">
        <path d="M997 292V306M1005 306V325M968 313V345M950 333V350M1041 330V355M1075 345V372M1000 355V375M953 383V402M1012 350V372M985 410V425M1040 390V405" />
        <path d="M1127 418L1242 368M1247 367V407M1172 367V395M1216 475V527M1219 527V545M1197 400V415" />
      </g>
      <g fill="none" stroke="#00ffff">
        <path d="M1017 305V330M972 340V355M980 350V362M1006 380V398M960 330V345M1053 385V400M1000 405V420M1077 385V392" />
        <path d="M1147 348V368M1174 380V390M1197 405V415M1246 407V420M1219 532V543" />
      </g>
      {/* cutter */}
      <path d="M1114 409H1126V420Q1120 426 1114 420Z" fill="#a8a800" />
      <rect x="1113" y="390" width="14" height="19" fill="#008f00" />
      <rect x="1112" y="255" width="16" height="135" fill="#009a00" />
      <rect x="1116" y="255" width="5" height="135" fill="#00a800" />
      <ellipse cx="1120" cy="255" rx="8" ry="5" fill="#00e000" stroke="#006000" />
      <path d="M1112 390H1128M1113 409H1127" stroke="#000" strokeDasharray="2 2" />
      {/* label plate */}
      <path d="M942 737L977 756H942Z" fill="#000" />
      <path d="M1012 756V706Q1012 703 1015 703L1107 756M1012 733L1040 750" fill="none" stroke="#000" />
      <text transform="matrix(.87 .5 -.3 .95 1060 748)" fontSize="16" fontWeight="700" fill="#000" fontFamily="Liberation Sans, sans-serif">MIN</text>
    </svg>
  )
}

const Btn = ({ n, className = '' }: { n: string; className?: string }) => (
  <span className={`flex h-[32px] w-[32px] shrink-0 items-center justify-center border border-[#adadad] bg-[#e1e1e1] ${className}`}>
    <Icon n={n} size={28} />
  </span>
)

const Legend = ({ children }: { children: ReactNode }) => (
  <span className="absolute left-[7px] -top-[8px] bg-white px-[1px] text-[12px] leading-[16px]">{children}</span>
)

const cols = ['w-[49px]', 'w-[72px]', 'w-[85px]', 'w-[94px]', 'w-[95px]', 'w-[68px]', 'flex-1']

const rows: [string, string, string, string, string, string][] = [
  ['0', '加工', '0', '0.2', '0', '0.2'],
  ['1', '加工', '0', '-', '0', '0'],
  ['2', '加工', '0', '-', '0', '0'],
  ['3', '加工', '0', '-', '0', '0'],
  ['4', '加工', '0', '-', '0', '0'],
  ['5', '加工', '0', '-', '0', '0'],
  ['6', '加工', '0', '-', '0', '0'],
  ['7', '加工', '0', '-', '0', '0']
]
const lastCol = ['5', '0', '0', '0', '0', '0', '0', '0']

function ThicknessTable() {
  const heads = ['组...', '模式', '余量', '轴向', '总余量', '总轴数 ...', '#']
  return (
    <div className="ml-[4px] mt-[14px] flex h-[266px] w-[649px] flex-col border border-[#828790] text-[12px]">
      <div className="flex h-[25px] shrink-0">
        {heads.map((h, i) => (
          <div key={h} className={`relative flex items-center border-r border-[#e5e5e5] pl-[8px] text-[#222] last:border-r-0 ${cols[i]}`}>
            {h}
            {i === 1 && <span className="absolute left-[53px]">...</span>}
          </div>
        ))}
      </div>
      {rows.map((r, i) => (
        <div key={r[0]} className={`flex h-[21px] shrink-0 items-center text-[#111] ${i === 0 ? 'bg-[#f0f0f0]' : ''}`}>
          <div className={`flex h-full items-center pl-[4px] ${cols[0]}`}>
            <Svg size={17}>
              <g transform="rotate(-45 10 10)" fill="none">
                <path d="M2 4H18V10H2V16H18" stroke="#00aa00" strokeWidth="3.200" />
                <path d="M2 4H18V10H2V16H18" stroke="#fff" strokeWidth="1.200" />
              </g>
            </Svg>
            <span className={`flex h-full flex-1 items-center pl-[1px] ${i === 0 ? 'bg-[#0078d7] text-[#e8a060]' : ''}`}>{r[0]}</span>
          </div>
          <div className={`pl-[6px] ${cols[1]}`}>{r[1]}</div>
          <div className={`pl-[7px] ${cols[2]}`}>{r[2]}</div>
          <div className={`pl-[6px] ${cols[3]}`}>{r[3]}</div>
          <div className={`pl-[6px] ${cols[4]}`}>{r[4]}</div>
          <div className={`pl-[6px] ${cols[5]}`}>{r[5]}</div>
          <div className={`pl-[7px] ${cols[6]}`}>{lastCol[i]}</div>
        </div>
      ))}
      <div className="flex h-[21px] shrink-0 items-center text-[#111]">
        <div className={`pl-[5px] ${cols[0]}`}><Icon n="redX" size={16} /></div>
        <div className={`pl-[6px] ${cols[1]}`}>加工</div>
        <div className={`pl-[7px] ${cols[2]}`}>-</div>
        <div className={`pl-[6px] ${cols[3]}`}>-</div>
        <div className={`pl-[6px] ${cols[4]}`}>0</div>
        <div className={`pl-[6px] ${cols[5]}`}>0</div>
        <div className={`pl-[7px] ${cols[6]}`}>596</div>
      </div>
      <div className="flex-1" />
      <div className="mb-[2px] flex h-[15px] shrink-0 items-center bg-[#f0f0f0] pl-[2px]">
        <ChevronLeft size={11} strokeWidth={2.500} className="text-[#555]" />
        <span className="ml-[5px] h-full w-[511px] bg-[#c8c8c8]" />
        <span className="flex-1" />
        <ChevronRight size={11} strokeWidth={2.500} className="mr-[2px] text-[#555]" />
      </div>
    </div>
  )
}

function MainDialog() {
  return (
    <div className="absolute left-[141px] top-[125px] flex h-[675px] w-[685px] flex-col border border-[#666] bg-[#f0f0f0] text-[12px] text-[#111] shadow-[0_0_28px_rgba(0,0,0,0.6)]">
      <div className="flex h-[30px] shrink-0 items-center bg-white pl-[8px]">
        <span className="flex h-[14px] w-[14px] items-center justify-center rounded-[2px] bg-[#f8e0c8] text-[12px] font-bold leading-none text-[#c87a2a]">P</span>
        <span className="ml-[6px]">部件余量</span>
        <span className="ml-auto text-[13px] text-[#333]">?</span>
        <X size={15} strokeWidth={1.200} className="ml-[36px] mr-[15px] text-[#222]" />
      </div>
      <div className="ml-[6px] mt-[9px] flex h-[25px] shrink-0 items-end">
        <span className="z-10 -mb-px flex h-[26px] w-[52px] items-center justify-center border border-b-0 border-[#d9d9d9] bg-white">曲面</span>
        <span className="flex h-[23px] w-[45px] items-center justify-center border border-l-0 border-[#d9d9d9] bg-[#f0f0f0]">检查</span>
        <span className="flex h-[23px] w-[60px] items-center justify-center border border-l-0 border-[#d9d9d9] bg-[#f0f0f0]">曲面缺省</span>
      </div>
      <div className="ml-[6px] h-[573px] w-[669px] shrink-0 border border-[#d9d9d9] bg-white pl-[8px] pt-[23px]">
        <div className="flex">
          <div className="relative h-[78px] w-[240px] shrink-0 border border-[#d9d9d9] pl-[6px] pt-[19px]">
            <Legend>元素</Legend>
            <div className="flex items-start">
              <div className="flex h-[27px] w-[47px] items-center border border-[#7a7a7a] bg-white pl-[2px]">
                <span className="border border-dotted border-[#333] bg-[#f0f0f0]"><Zig size={21} dark="#3d94a8" light="#3d94a8" /></span>
                <Chev className="ml-[3px]" />
              </div>
              <div className="ml-[15px] mt-[3px] flex h-[23px] w-[165px] items-center border border-[#adadad] bg-[#e1e1e1] pl-[3px]">
                13精光-R1.5-最佳等高
                <Chev className="ml-auto mr-[2px]" />
              </div>
            </div>
          </div>
          <div className="relative ml-[117px] h-[78px] w-[296px] shrink-0 border border-[#d9d9d9] pl-[10px] pt-[14px]">
            <Legend>复制</Legend>
            <div className="flex items-start">
              <div className="mt-[7px] flex h-[28px] w-[46px] items-center border border-[#7a7a7a] bg-white pl-[2px]">
                <span className="bg-[#f0f0f0]"><Zig size={24} dark="#3d94a8" light="#3d94a8" /></span>
                <Chev className="ml-[2px]" />
              </div>
              <div className="ml-[12px] mt-[9px] flex h-[24px] w-[165px] items-center justify-end border border-[#adadad] bg-[#e1e1e1] pr-[2px]"><Chev /></div>
              <span className="ml-[4px] flex h-[39px] w-[39px] items-center justify-center border border-[#adadad] bg-[#e1e1e1]"><Icon n="twist" size={34} /></span>
            </div>
          </div>
        </div>
        <div className="mt-[5px] flex h-[40px] items-start">
          <div className="ml-[6px] mt-[7px] flex items-start gap-[13px]">
            <Btn n="pick" />
            <Btn n="cylDown" />
            <Btn n="cylUp" />
            <Btn n="cylX" />
          </div>
          <label className="ml-[25px] mt-[24px] flex items-center gap-[3px]">
            <span className="h-[13px] w-[13px] border border-[#333] bg-white" />
            使用轴向余量
          </label>
          <Btn n="cylGear" className="ml-[320px]" />
        </div>
        <div className="mt-[65px] flex h-[51px] items-start">
          <div className="ml-[4px] w-[304px]">
            <div className="pl-[3px] leading-[16px]">加工方式</div>
            <div className="mt-[7px] flex h-[25px] w-[119px] items-center border border-[#7a7a7a] pl-[4px]">
              加工
              <Chev className="ml-auto mr-[2px]" />
            </div>
          </div>
          <div className="w-[299px]">
            <div className="leading-[16px] text-[#0066cc] underline">余量</div>
            <div className="mt-[7px] flex h-[28px] w-[84px] items-start border border-[#7a7a7a] pl-[3px] pt-[3px]">0.0</div>
          </div>
          <Btn n="drawer" className="mt-[12px]" />
        </div>
        <ThicknessTable />
      </div>
      <div className="ml-[206px] mt-[14px] flex gap-[12px]">
        {['应用', '接受', '取消'].map((t) => (
          <span key={t} className="flex h-[30px] w-[86px] items-center justify-center border border-[#adadad] bg-[#e1e1e1] pt-[2px]">{t}</span>
        ))}
      </div>
    </div>
  )
}

function BackDialog() {
  return (
    <div className="absolute left-[700px] top-[270px] flex h-[530px] w-[241px] flex-col items-end bg-[#f0f0f0] shadow-[0_0_8px_rgba(0,0,0,0.35)]">
      <div className="flex h-[30px] w-full shrink-0 items-center justify-end bg-white pr-[15px] text-[14px] text-[#9a9a9a]">
        <span className="mr-[33px]">?</span>
        <X size={15} strokeWidth={1.100} className="text-[#888]" />
      </div>
      <div className="mr-[14px] mt-[14px] h-[23px] w-[180px] shrink-0 border border-[#7a7a7a] bg-white" />
      <div className="mr-[14px] mt-[16px] h-[30px] w-[180px] shrink-0 rounded-tr-[5px] border border-[#444] border-b-[#39b7d8] bg-gradient-to-b from-[#97afc9] to-[#b3cee6]" />
      <div className="mr-[40px] mt-[157px] flex h-[24px] w-[160px] shrink-0 items-center justify-end border border-[#7a7a7a] bg-white pr-[1px]"><Chev /></div>
      <div className="mr-[30px] mt-[17px] flex h-[72px] w-[180px] shrink-0 items-center justify-end border border-[#e0e0e0] pr-[11px]">
        <span className="flex h-[24px] w-[24px] items-center justify-center border border-[#adadad] bg-[#e1e1e1]"><Icon n="toolArc" size={20} /></span>
      </div>
      <div className="mr-[30px] mt-[22px] h-[76px] w-[180px] shrink-0 border border-[#e0e0e0]" />
      <div className="mr-[30px] mt-[32px] h-[30px] w-[180px] shrink-0 border border-[#e0e0e0]" />
    </div>
  )
}

export default function App() {
  return (
    <div className="relative h-[800px] w-[1376px] overflow-hidden bg-[#f0f0f0] font-['Noto_Sans','Noto_Sans_CJK_SC',sans-serif]">
      <div className="-ml-[6px] flex h-[17px] items-center gap-[15px] bg-white text-[12px] leading-none text-[#555]">
        <span>文件(F)</span>
        <span>查看(V)</span>
        <span>插入(I)</span>
        <span>显示(D)</span>
        <span>工具(T)</span>
        <span>帮助(H)</span>
      </div>
      <Toolbars />
      <div className="flex h-[687px]">
        <TreePanel />
        <div className="flex-1 border-t border-[#777]">
          <Viewport />
        </div>
      </div>

      <BackDialog />
      <MainDialog />

      {/* input method bar */}
      <div className="absolute left-[1233px] top-[627px] flex items-center">
        <span className="relative z-10 flex h-[30px] w-[31px] -rotate-[10deg] items-center justify-center rounded-[6px] bg-[#f45a1c] text-[24px] font-bold italic leading-none text-white">S</span>
        <div className="-ml-[5px] flex h-[25px] w-[120px] items-center border border-[#c8daf0] bg-white pl-[12px] text-[#1a6fd0]">
          <span className="text-[14px] font-bold">中</span>
          <span className="ml-[9px] text-[14px] font-bold leading-none">°,</span>
          <svg width="14" height="18" viewBox="0 0 14 18" className="ml-[12px] shrink-0">
            <rect x="4" y="1" width="6" height="10" rx="3" fill="#1a6fd0" />
            <path d="M1 8c0 7 12 7 12 0M7 13v4M3 17h8" fill="none" stroke="#1a6fd0" strokeWidth="1.300" />
          </svg>
          <svg width="16" height="12" viewBox="0 0 16 12" className="ml-[10px] shrink-0">
            <rect x=".5" y=".5" width="15" height="11" rx="1" fill="#1a6fd0" />
            <path d="M3 3.500h2M7 3.500h2M11 3.500h2M3 6h2M7 6h2M11 6h2M4 9h8" stroke="#fff" />
          </svg>
          <svg width="12" height="14" viewBox="0 0 12 14" className="ml-[6px] shrink-0">
            <path d="M0 3l3-2h6l3 2-1 3-2-1v8H3V5L1 6z" fill="#1a6fd0" />
          </svg>
        </div>
      </div>

      {/* activation watermark and forum mark */}
      <div className="pointer-events-none absolute left-[1155px] top-[741px] text-[#9c9c9c]">
        <div className="text-[20px] leading-[26px]">激活 Windows</div>
        <div className="text-[15.5px] leading-[20px]">转到“设置”以激活 Windows</div>
      </div>
      <div className="absolute left-[1189px] top-[779px] whitespace-nowrap font-['Liberation_Serif','Noto_Sans_CJK_SC',serif] text-[14px] leading-[18px] tracking-[1px] text-[#333]">UG爱好者论坛@道刻载等涂</div>
    </div>
  )
}
